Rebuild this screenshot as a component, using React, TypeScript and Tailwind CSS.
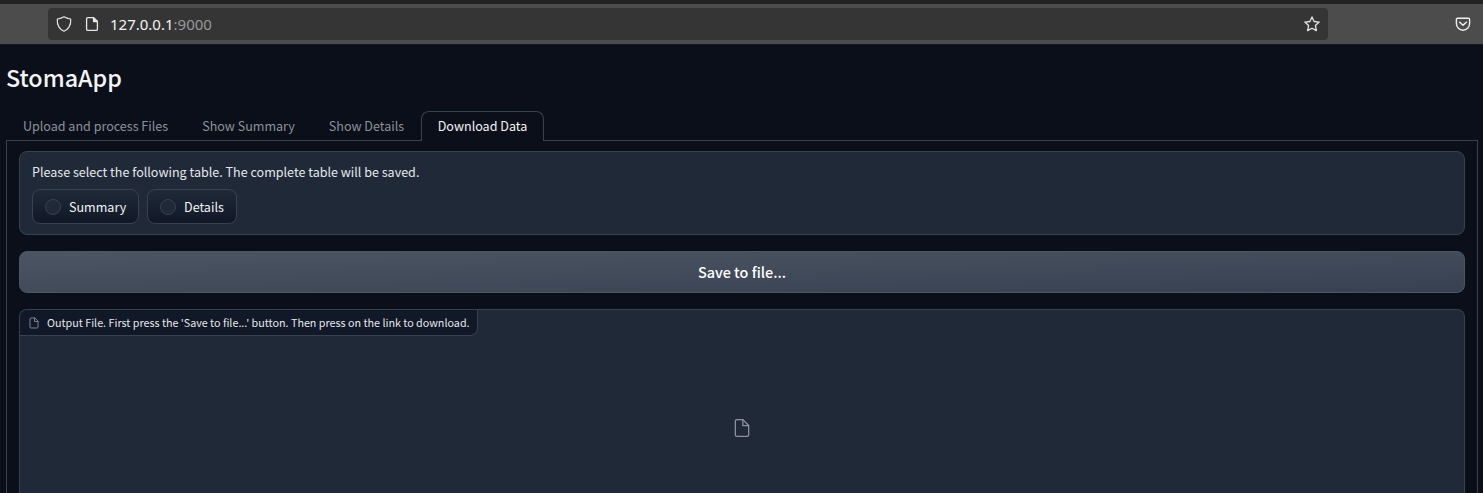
import React from 'react';

function FileIcon({ className }: { className: string }) {
  return (
    <svg
      className={className}
      viewBox="0 0 24 24"
      fill="none"
      stroke="currentColor"
      strokeLinecap="round"
      strokeLinejoin="round"
    >
      <path d="M13 2H6a2 2 0 0 0-2 2v16a2 2 0 0 0 2 2h12a2 2 0 0 0 2-2V9z" />
      <polyline points="13 2 13 9 20 9" />
    </svg>
  );
}

function BrowserBar() {
  return (
    <header className="h-[45px] shrink-0 border-t-4 border-b border-t-[#232323] border-b-[#16181d] bg-[#4c4c4c] pt-1 pl-12">
      <div className="flex h-8 items-center">
        <div className="flex h-8 w-[1280px] items-center rounded-[4px] bg-[#353535] pr-2 pl-2">
          <svg className="size-4" viewBox="0 0 16 16" fill="none" stroke="#e4e4e4" strokeWidth="1.2" strokeLinejoin="round">
            <path d="M8 .8C6.200 2 3.800 2.700 1.300 3c-.2 2.400 0 5.600 1.700 8.200C4.300 13.200 6.200 14.700 8 15.300c1.800-.6 3.700-2.100 5-4.100 1.700-2.600 1.900-5.800 1.700-8.200C12.200 2.700 9.800 2 8 .8z" />
          </svg>
          <svg className="ml-3 size-4" viewBox="0 0 16 16" fill="none" stroke="#e8e8e8" strokeWidth="1.3" strokeLinejoin="round">
            <path d="M9.500 1.600H3.800a1.200 1.200 0 0 0-1.200 1.200v10.400a1.200 1.200 0 0 0 1.200 1.200h8.400a1.200 1.200 0 0 0 1.200-1.200V5.500z" />
            <path d="M9.500 1.600V5.500h3.900z" fill="#e8e8e8" />
          </svg>
          <span className="ml-[10px] font-['Noto_Sans',sans-serif] text-[15px] leading-8 text-[#f4f4f4]">
            127.0.0.1<span className="text-[#999999]">:9000</span>
          </span>
          <svg className="ml-auto size-4" viewBox="0 0 16 16" fill="none" stroke="#e4e4e4" strokeWidth="1.3" strokeLinejoin="round">
            <path d="M8 .9l2.100 4.600 5.100.6-3.800 3.500 1 5L8 12.200l-4.400 2.400 1-5L.8 6.100l5.100-.6z" />
          </svg>
        </div>
        <svg className="ml-[127px] size-4" viewBox="0 0 16 16" fill="none" stroke="#f0f0f0" strokeWidth="1.4" strokeLinecap="round" strokeLinejoin="round">
          <path d="M2.600 2.200h10.800a1.200 1.200 0 0 1 1.200 1.200v4.200a6.600 6.600 0 0 1-13.200 0V3.400a1.200 1.200 0 0 1 1.200-1.200z" />
          <path d="M4.700 6.200L8 9.300l3.300-3.100" strokeWidth="1.5" />
        </svg>
      </div>
    </header>
  );
}

function Tab({ label, active = false, width }: { label: string; active?: boolean; width: string }) {
  return (
    <button
      className={`${width} -mb-px h-[30px] shrink-0 rounded-t-lg border border-b-0 pb-px text-center text-[12.55px] leading-[28px] whitespace-nowrap ${
        active ? 'border-[#374151] bg-[#0b0f19] text-[#f3f4f6]' : 'border-transparent text-[#8b919c]'
      }`}
    >
      {label}
    </button>
  );
}

function RadioOption({ label, width }: { label: string; width: string }) {
  return (
    <label
      className={`${width} flex h-[35px] items-center rounded-lg border border-[#374151] bg-linear-to-b from-[#1f2937] to-[#111827] pl-3 text-[12.55px] text-[#f3f4f6]`}
    >
      <span className="size-4 shrink-0 rounded-full border border-[#374151] bg-[#1f2937]" />
      <span className="ml-2 pt-[2px]">{label}</span>
    </label>
  );
}

export default function App() {
  return (
    <div className="flex h-[493px] w-[1483px] flex-col overflow-hidden bg-[#0b0f19] font-['Noto_Sans_CJK_SC',sans-serif]">
      <BrowserBar />
      <main className="flex min-h-0 flex-1 flex-col pr-[5px] pl-1.5">
        <h1 className="mt-[15px] h-[34px] text-[23.3px] leading-[34px] font-medium text-[#f3f4f6]">StomaApp</h1>
        <nav className="mt-[17px] flex h-[30px] border-b border-[#374151]">
          <Tab label="Upload and process Files" width="w-[179px]" />
          <Tab label="Show Summary" width="w-[127px]" />
          <Tab label="Show Details" width="w-[109px]" />
          <Tab label="Download Data" width="w-[123px]" active />
        </nav>
        <section className="flex min-h-0 flex-1 flex-col gap-4 border-x border-[#374151] px-3 pt-[10px]">
          <div className="h-[84px] shrink-0 rounded-lg border border-[#374151] bg-[#1f2937] px-3 pt-[10px]">
            <p className="h-5 text-[12.55px] leading-5 text-[#e5e7eb]">
              Please select the following table. The complete table will be saved.
            </p>
            <div className="mt-[7px] flex gap-2">
              <RadioOption label="Summary" width="w-[107px]" />
              <RadioOption label="Details" width="w-[90px]" />
            </div>
          </div>
          <button className="h-[42px] shrink-0 rounded-lg border border-[#4b5563] bg-linear-to-br from-[#4b5563] to-[#374151] text-center text-[14.4px] leading-10 font-medium text-white">
            Save to file...
          </button>
          <div className="flex min-h-0 flex-1 flex-col items-start overflow-hidden rounded-t-lg border border-b-0 border-[#374151] bg-[#1f2937]">
            <div className="flex h-[26px] w-[458px] shrink-0 items-center rounded-br-lg border-r border-b border-[#374151] bg-[#111827] pl-[7.5px]">
              <FileIcon className="size-3 stroke-2 text-[#7c828d]" />
              <span className="ml-[7.5px] text-[10.75px] leading-4 whitespace-nowrap text-[#e5e7eb]">
                Output File. First press the 'Save to file...' button. Then press on the link to download.
              </span>
            </div>
            <FileIcon className="mt-[82px] size-5 self-center stroke-[1.5] text-[#8f959f]" />
          </div>
        </section>
      </main>
    </div>
  );
}
